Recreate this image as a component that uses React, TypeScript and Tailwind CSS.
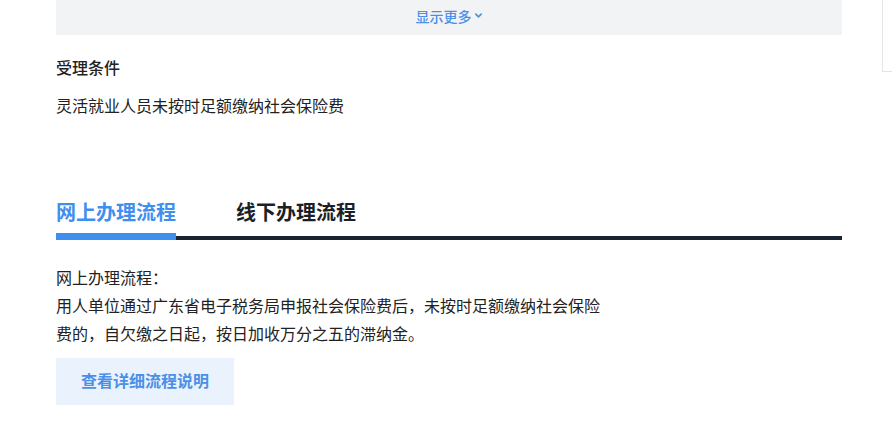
import React from "react";

const font = { fontFamily: '"Noto Sans CJK SC", "Noto Sans", sans-serif' };

const App = () => {
  return (
    <div className="relative w-[892px] h-[428px] bg-white overflow-hidden text-[#222]" style={font}>
      {/* floating side panel edge */}
      <div className="absolute right-0 top-0 w-[10px] h-[72px] border-l border-b border-[#e4e4e4] bg-white" />

      <div className="ml-[56px] w-[786px]">
        <div className="h-[35px] bg-[#f2f3f5] flex items-center justify-center pb-[4px]">
          <button className="flex items-center gap-[2px] text-[14px] font-medium text-[#4a90e8] leading-none">
            显示更多
            <svg width="9" height="9" viewBox="0 0 10 10" fill="none">
              <path d="M2 3.5 L5 6.5 L8 3.5" stroke="#4a90e8" strokeWidth="1.8" strokeLinecap="round" strokeLinejoin="round" />
            </svg>
          </button>
        </div>

        <h3 className="mt-[20px] text-[16px] leading-[24px] font-medium text-[#222]">受理条件</h3>
        <p className="mt-[14px] text-[16px] leading-[24px] text-[#222]">灵活就业人员未按时足额缴纳社会保险费</p>

        <div className="mt-[81px] flex gap-[60px] text-[20px] leading-[28px] font-bold">
          <span className="text-[#3f8ff0]">网上办理流程</span>
          <span className="text-[#1b1f26]">线下办理流程</span>
        </div>
        <div className="mt-[7px] flex items-end">
          <div className="w-[120px] h-[7px] bg-[#3f8ff0]" />
          <div className="flex-1 h-[4px] bg-[#1b2230]" />
        </div>

        <div className="mt-[23px] w-[550px] text-[16px] leading-[28px] text-[#222]">
          <p>网上办理流程：</p>
          <p>用人单位通过广东省电子税务局申报社会保险费后，未按时足额缴纳社会保险费的，自欠缴之日起，按日加收万分之五的滞纳金。</p>
        </div>

        <button className="mt-[11px] w-[178px] h-[47px] pb-[3px] bg-[#eaf3fd] text-[16px] font-bold text-[#4a90e8] flex items-center justify-center">
          查看详细流程说明
        </button>
      </div>
    </div>
  );
};

export default App;
